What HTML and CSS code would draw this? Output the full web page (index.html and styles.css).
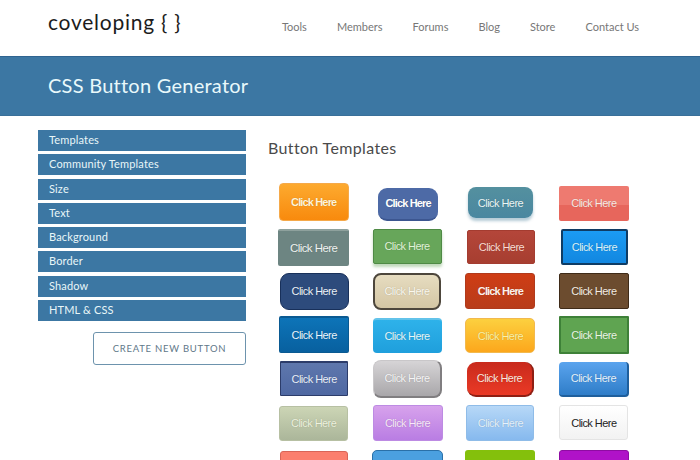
FILE: index.html
```html
<!DOCTYPE html>
<html lang="en">
<head>
<meta charset="utf-8">
<title>CSS Button Generator</title>
<link rel="stylesheet" href="styles.css">
</head>
<body>
<header class="top">
  <div class="logo">coveloping { }</div>
  <nav class="nav">
    <a>Tools</a><a>Members</a><a>Forums</a><a>Blog</a><a>Store</a><a>Contact Us</a>
  </nav>
</header>
<div class="band"><h1>CSS Button Generator</h1></div>
<main class="main">
  <aside class="side">
    <ul class="menu">
      <li>Templates</li>
      <li>Community Templates</li>
      <li>Size</li>
      <li>Text</li>
      <li>Background</li>
      <li>Border</li>
      <li>Shadow</li>
      <li>HTML &amp; CSS</li>
    </ul>
    <a class="create">CREATE NEW BUTTON</a>
  </aside>
  <section class="content">
    <h2>Button Templates</h2>
    <div class="grid">
      <a class="btn b01">Click Here</a>
      <a class="btn b02">Click Here</a>
      <a class="btn b03">Click Here</a>
      <a class="btn b04">Click Here</a>
      <a class="btn b05">Click Here</a>
      <a class="btn b06">Click Here</a>
      <a class="btn b07">Click Here</a>
      <a class="btn b08">Click Here</a>
      <a class="btn b09">Click Here</a>
      <a class="btn b10">Click Here</a>
      <a class="btn b11">Click Here</a>
      <a class="btn b12">Click Here</a>
      <a class="btn b13">Click Here</a>
      <a class="btn b14">Click Here</a>
      <a class="btn b15">Click Here</a>
      <a class="btn b16">Click Here</a>
      <a class="btn b17">Click Here</a>
      <a class="btn b18">Click Here</a>
      <a class="btn b19">Click Here</a>
      <a class="btn b20">Click Here</a>
      <a class="btn b21">Click Here</a>
      <a class="btn b22">Click Here</a>
      <a class="btn b23">Click Here</a>
      <a class="btn b24">Click Here</a>
      <a class="btn b25"></a>
      <a class="btn b26"></a>
      <a class="btn b27"></a>
      <a class="btn b28"></a>
    </div>
  </section>
</main>
</body>
</html>
```
FILE: styles.css
```css
* { box-sizing: border-box; }
html, body { margin: 0; height: 460px; overflow: hidden; background: #fff; }
body { font-family: Lato, "Open Sans", sans-serif; }

.top { height: 56px; display: flex; align-items: flex-start; padding: 0 61px 0 48px; }
.logo { font-size: 21px; line-height: 24px; margin-top: 10px; letter-spacing: .75px; color: #1c1c1c; }
.nav { margin-left: auto; display: flex; gap: 30px; font-size: 11px; line-height: 14px; margin-top: 20px; color: #777; }

.band { height: 60px; background: #3c77a3; border-top: 1px solid #2f6490; border-bottom: 1px solid #3a7099; padding: 0 48px 2px; display: flex; align-items: center; }
.band h1 { margin: 0; font-weight: 400; font-size: 20px; color: #e9f9fb; letter-spacing: .25px; }

.main { height: 344px; overflow: hidden; display: flex; align-items: flex-start; padding: 14px 0 0 38px; }
.side { width: 208px; display: flex; flex-direction: column; }
.menu { list-style: none; margin: 0; padding: 0; display: flex; flex-direction: column; gap: 3.3px; }
.menu li { height: 21px; line-height: 20px; background: #3c77a3; color: #e8f6f8; font-size: 11px; padding-left: 11px; letter-spacing: .15px; }
.create { align-self: flex-end; width: 153px; height: 33px; margin-top: 11px; border: 1px solid #6d93ad; border-radius: 3px; display: flex; align-items: center; justify-content: center; font-size: 9.5px; letter-spacing: .75px; color: #5f7889; }

.content { margin-left: 22px; height: 330px; overflow: hidden; }
.content h2 { margin: 8px 0 0; font-weight: 400; font-size: 16px; line-height: 20px; color: #4a4a4a; letter-spacing: .35px; }
.grid { display: grid; grid-template-columns: repeat(4, 93.4px); grid-auto-rows: 44px; margin-top: 23px; margin-left: -1px; place-items: center; }

.btn { display: flex; align-items: center; justify-content: center; width: 69px; height: 36px; font-family: "Liberation Sans", Arial, sans-serif; font-size: 11px; letter-spacing: -.55px; color: #fff; border-radius: 3px; text-shadow: 0 0 1px rgba(0,0,0,.25); }

.b01 { width: 70px; height: 38px; margin: 0 0 2px 0; background: linear-gradient(#fdaa2f, #f88a0d); border: 1px solid #f5a94a; border-radius: 4px; font-weight: 700; letter-spacing: -.85px; color: #fff3d8; }
.b02 { width: 60px; height: 33px; margin: 2px 0 0 2px; background: #4d6aa6; border-bottom: 2px solid #3c5690; border-radius: 9px; font-weight: 700; letter-spacing: -.85px; }
.b03 { width: 65px; height: 31px; margin: 0 0 1px 0; background: linear-gradient(#54909f, #4a87a0); border-radius: 8px; box-shadow: 0 3px 3px rgba(90,140,165,.45); color: #ecf7f7; }
.b04 { width: 70px; height: 35px; margin: 0; background: linear-gradient(#ee7a70 55%, #e7665c 55%); border-radius: 2px; color: #fbeae4; }

.b05 { width: 71px; height: 37px; margin: 0; background: #6d8582; border-radius: 2px; border-top: 2px solid #8ea19d; color: #f0f4f2; font-size: 11.5px; }
.b06 { width: 69px; height: 35px; margin: 0 0 2px 0; background: #67a65a; border: 1px solid #4f8a45; border-radius: 2px; box-shadow: 0 3px 3px rgba(130,180,120,.5); color: #e0f4d8; }
.b07 { width: 68px; height: 34px; margin: 0 0 0 2px; background: linear-gradient(#b4463a, #a73e30); border: 1px solid #a43c30; border-radius: 2px; color: #fbdcd3; }
.b08 { width: 67px; height: 36px; margin: 0 0 0 1px; background: linear-gradient(#1b9bf3, #1287e0); border: 2px solid #0f3c64; border-radius: 2px; color: #dcf3fb; }

.b09 { width: 69px; height: 37px; margin: 0 0 0 1px; background: #2d4b7c; border: 1px solid #18305a; border-radius: 9px; color: #eaf1f8; }
.b10 { width: 68px; height: 37px; margin: 0; background: linear-gradient(#e6dcc0, #d4c6a4); border: 2px solid #4d463c; border-radius: 8px; color: #fbf8ee; }
.b11 { width: 70px; height: 36px; margin: 0; background: linear-gradient(#cf3d15, #b83c1a); border: 1px solid #b03a1c; border-radius: 3px; font-weight: 700; letter-spacing: -.85px; color: #fdf1ec; }
.b12 { width: 70px; height: 36px; margin: 0; background: #6c4c2f; border: 1px solid #3f2b18; border-radius: 2px; color: #f4ece2; }

.b13 { width: 70px; height: 37px; margin: 0 0 1px 1px; background: linear-gradient(#0d74b8, #08609f); border: 1px solid #0a5a92; border-top: 2px solid #0a5a92; border-radius: 2px; color: #e8f6ff; }
.b14 { width: 69px; height: 35px; margin: 0; background: linear-gradient(#2eb2ea, #1f9fdc); border-top: 2px solid #62c3ea; border-radius: 4px; color: #e4f7fb; }
.b15 { width: 70px; height: 35px; margin: 1px 0 0 0; background: linear-gradient(#fcd03f, #fca71c); border: 1px solid #f2b94e; border-radius: 5px; color: #fdf2a8; }
.b16 { width: 70px; height: 38px; margin: 0; background: #5fa451; border: 2px solid #3e8138; border-radius: 1px; color: #eaf6e4; }

.b17 { width: 68px; height: 35px; margin: 0 0 1px 1px; background: linear-gradient(#5e77ad, #4f68a2); border: 1px solid #2c3c6a; border-top: 2px solid #2c3c6a; border-radius: 1px; color: #e8effa; }
.b18 { width: 69px; height: 38px; margin: 0 0 1px 1px; background: linear-gradient(#d6d4d6, #a9a7aa); border: 1px solid #c9c7c9; border-right: 2px solid #807e80; border-bottom: 2px solid #807e80; border-radius: 8px; color: #f6f5f6; }
.b19 { width: 67px; height: 35px; margin: 0; background: linear-gradient(#c82a1c, #ea3a26); border-right: 2px solid #8f1f14; border-bottom: 2px solid #8f1f14; border-radius: 9px; color: #fde6de; }
.b20 { width: 70px; height: 35px; margin: 0 0 0 1px; background: linear-gradient(#5aa4ee, #2f7dc8); border-right: 2px solid #1f5f9c; border-bottom: 2px solid #1f5f9c; border-radius: 4px; color: #e4f2fd; }

.b21 { width: 69px; height: 35px; margin: 0; background: linear-gradient(#ccd5b5, #abb69a); border: 1px solid #b7c0a3; border-radius: 3px; color: #eef3df; }
.b22 { width: 70px; height: 36px; margin: 0 0 0 1px; background: linear-gradient(#d7a2ec, #b97de3); border: 1px solid #bd8be3; border-radius: 3px; color: #f8e8fb; }
.b23 { width: 68px; height: 36px; margin: 0; background: linear-gradient(#b7d8f7, #86b9ee); border: 1px solid #8fbce8; border-radius: 3px; color: #e4f2fd; }
.b24 { width: 69px; height: 35px; margin: 0 0 1px 0; background: linear-gradient(#fff, #f2f2f2); border: 1px solid #e4e4e4; border-radius: 3px; color: #222; text-shadow: none; }

.b25 { margin: 4px 0 0 0; background: #fb7f6e; border: 1px solid #d86558; height: 36px; width: 68px; }
.b26 { margin: 2px 0 0 0; background: #4ba0e0; border: 1px solid #2a70a8; height: 36px; width: 71px; border-radius: 5px; }
.b27 { margin: 2px 0 0 0; background: #84c00c; height: 36px; width: 70px; }
.b28 { margin: 2px 0 0 0; background: #b012c8; border: 1px solid #8e0ca2; height: 36px; width: 70px; }
```
